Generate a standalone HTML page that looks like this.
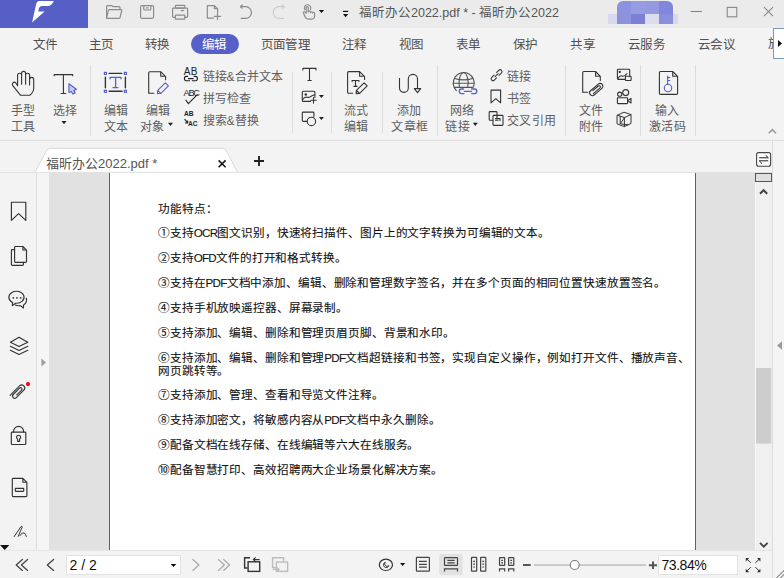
<!DOCTYPE html>
<html lang="zh-CN">
<head>
<meta charset="utf-8">
<style>
*{box-sizing:border-box;margin:0;padding:0}
html,body{width:784px;height:578px;overflow:hidden;background:#f3f3f3;font-family:"Liberation Sans",sans-serif;color:#555}
.a{position:absolute}
.t{position:absolute;white-space:nowrap;line-height:1}
svg{position:absolute;overflow:visible}
.ic{fill:none;stroke:#333;stroke-width:1.1;stroke-linecap:round;stroke-linejoin:round}
.gi{fill:none;stroke:#8c8c8c;stroke-width:1.2;stroke-linecap:round;stroke-linejoin:round}
.menu{font-size:12.5px;letter-spacing:-0.6px;color:#505050;top:39px}
.lbl{font-size:12px;letter-spacing:0.3px;color:#5e5e5e}
.lt{letter-spacing:-0.7px}
.doc{font-size:11.6px;letter-spacing:-0.12px;color:#111;-webkit-text-stroke:0.1px #111;left:158px}
</style>
</head>
<body>
<!-- TITLE BAR -->
<div class="a" style="left:0;top:0;width:784px;height:28px;background:#ebebeb"></div>
<div class="a" style="left:0;top:0;width:88px;height:28px;background:#565fc6"></div>
<svg style="left:0;top:0" width="88" height="28"><path d="M53.8,1.1 L39.5,1.1 Q36.6,1.4 36,4.8 L32.1,22.6 L44.6,11.5 L38.2,11.5 L38.9,8.2 Q39.6,6.1 42.3,6.1 L48.5,6.1 Q51.8,5.8 53.8,1.1 Z" fill="#fff"/></svg>

<div id="title-icons">
<svg style="left:0;top:0" width="784" height="28">
<g class="gi">
<path d="M106.6,17.8 V6.8 Q106.6,5.6 107.8,5.6 H111.6 L113,6.6 H119 Q120,6.6 120,7.6 V9.2"/>
<path d="M108.8,9.6 H121.2 Q122,9.6 121.8,10.4 L120,17.6 Q119.8,18.3 119,18.3 H107 Q106.4,18.3 106.6,17.6 L108.4,10.3"/>
<rect x="140.6" y="5.6" width="13" height="12.7" rx="1.2"/>
<path d="M143.8,5.8 V9.2 Q143.8,10 144.6,10 H150 Q150.8,10 150.8,9.2 V5.8"/>
<path d="M146.6,7.9 H148"/>
<rect x="175.4" y="5.4" width="9.4" height="2.8" rx="0.6"/>
<path d="M175,17.4 H173.4 Q172.6,17.4 172.6,16.6 V9 Q172.6,8.2 173.4,8.2 H186.8 Q187.6,8.2 187.6,9 V16.6 Q187.6,17.4 186.8,17.4 H185"/>
<rect x="175.4" y="15.2" width="9.4" height="3.9" rx="0.6"/>
<path d="M181.2,10.6 H183.6"/>
<path d="M213.4,18.2 H207.9 Q207.3,18.2 207.3,17.6 V6.2 Q207.3,5.6 207.9,5.6 H214.4 L217.6,8.8 V12.4"/>
<path d="M214.4,5.8 V8.6 H217.4"/>
<path d="M214.4,16.4 H220.6 M217.5,13.3 V19.5"/>
<path d="M240.6,6.6 H245.6 A5.85,5.85 0 0 1 245.6,18.3 H241.2"/>
<path d="M242.2,5 L240.4,6.6 L242.2,8.2"/>
<path d="M303.5,13.2 Q303,11.8 304.4,11.8 Q305.4,11.8 306.2,13.4 V7.6 Q306.2,6.6 307.2,6.6 Q308.2,6.6 308.2,7.6 V12 Q308.2,10.8 309.4,10.8 Q310.4,10.8 310.4,12 V12.6 Q310.6,11.6 311.6,11.8 Q312.4,11.9 312.6,13 Q312.8,12.2 313.6,12.4 Q314.6,12.6 314.6,13.6 V16 Q314.6,19.2 310.8,19.2 H308.8 Q306.6,19.2 305.4,17.4 Z"/>
<path d="M304.8,9.6 A3.2,3.2 0 1 1 310.4,9.4"/>
</g>
<g class="gi" style="stroke:#cbcbcb">
<path d="M284,6.6 H279 A5.85,5.85 0 0 0 279,18.3 H283.4"/>
<path d="M282.4,5 L284.2,6.6 L282.4,8.2"/>
</g>
<path d="M318.9,10 H324.1 L321.5,13.1 Z" fill="#111"/>
<rect x="343" y="10.8" width="5.2" height="1.2" fill="#111"/>
<path d="M343,14 H348.2 L345.6,17.2 Z" fill="#111"/>
</svg>
<div class="a" style="left:608px;top:14px;width:70px;height:10px;background:#d8d8ee"></div>
<div class="a" style="left:617px;top:1px;width:56px;height:23px;border-radius:6px 6px 0 0;overflow:hidden">
<div class="a" style="left:0;top:0;width:14px;height:13px;background:#8c92e0"></div>
<div class="a" style="left:14px;top:0;width:14px;height:13px;background:#969be2"></div>
<div class="a" style="left:28px;top:0;width:14px;height:13px;background:#959ae0"></div>
<div class="a" style="left:42px;top:0;width:14px;height:13px;background:#8086da"></div>
<div class="a" style="left:0;top:13px;width:14px;height:10px;background:#8d92dc"></div>
<div class="a" style="left:14px;top:13px;width:14px;height:10px;background:#7b80d6"></div>
<div class="a" style="left:28px;top:13px;width:14px;height:10px;background:#dcdcef"></div>
<div class="a" style="left:42px;top:13px;width:14px;height:10px;background:#8a8fdc"></div>
</div>
<svg style="left:0;top:0" width="784" height="28">
<path d="M690.5,11.5 H702" stroke="#888" stroke-width="1.1" fill="none"/>
<rect x="727.2" y="7.4" width="9.6" height="9.4" stroke="#888" stroke-width="1.1" fill="none"/>
<path d="M764,7.2 L773,16.2 M773,7.2 L764,16.2" stroke="#888" stroke-width="1.1" fill="none"/>
</svg>
</div>
<div class="t" style="left:359px;top:7px;font-size:12.5px;color:#555">福昕办公2022.pdf * - 福昕办公2022</div>

<!-- MENU -->
<div id="menu">
<div class="t menu" style="left:32.5px">文件</div>
<div class="t menu" style="left:88.5px">主页</div>
<div class="t menu" style="left:144.8px">转换</div>
<div class="t menu" style="left:260.5px">页面管理</div>
<div class="t menu" style="left:341.5px">注释</div>
<div class="t menu" style="left:399.1px">视图</div>
<div class="t menu" style="left:455.8px">表单</div>
<div class="t menu" style="left:512.5px">保护</div>
<div class="t menu" style="left:570.2px">共享</div>
<div class="t menu" style="left:628.0px">云服务</div>
<div class="t menu" style="left:698.1px">云会议</div>
<div class="a" style="left:190.5px;top:33.5px;width:48.5px;height:20px;border-radius:10px;background:#5660c8"></div>
<div class="t menu" style="left:201.5px;color:#fff">编辑</div>
<div class="a" style="left:765px;top:28px;width:8px;height:31px;overflow:hidden"><div class="t menu" style="left:2.5px;top:10px">旅</div></div>
<div class="a" style="left:773px;top:28px;width:14px;height:31px;background:#fff;border:1px solid #7d9bb8"></div>
<svg style="left:0;top:0" width="784" height="60"><path d="M778,40 L782,43.5 L778,47 Z" fill="#111"/></svg>
</div>

<!-- RIBBON -->
<div id="ribbon">
<div class="t lbl" style="left:10.5px;top:105px">手型</div>
<div class="t lbl" style="left:10.5px;top:121px">工具</div>
<div class="t lbl" style="left:52.5px;top:105px">选择</div>
<div class="t lbl" style="left:103.5px;top:105px">编辑</div>
<div class="t lbl" style="left:103.5px;top:121px">文本</div>
<div class="t lbl" style="left:145.5px;top:105px">编辑</div>
<div class="t lbl" style="left:140.0px;top:121px">对象</div>
<div class="t lbl" style="left:202.5px;top:71px;letter-spacing:0">链接&amp;合并文本</div>
<div class="t lbl" style="left:202.5px;top:93px">拼写检查</div>
<div class="t lbl" style="left:202.5px;top:115px;letter-spacing:0">搜索&amp;替换</div>
<div class="t lbl" style="left:344.1px;top:105px">流式</div>
<div class="t lbl" style="left:344.1px;top:121px">编辑</div>
<div class="t lbl" style="left:396.8px;top:105px">添加</div>
<div class="t lbl" style="left:391.3px;top:121px">文章框</div>
<div class="t lbl" style="left:450.1px;top:105px">网络</div>
<div class="t lbl" style="left:445.3px;top:121px">链接</div>
<div class="t lbl" style="left:507.2px;top:71px">链接</div>
<div class="t lbl" style="left:507.2px;top:93px">书签</div>
<div class="t lbl" style="left:507.2px;top:115px">交叉引用</div>
<div class="t lbl" style="left:578.5px;top:105px">文件</div>
<div class="t lbl" style="left:578.5px;top:121px">附件</div>
<div class="t lbl" style="left:654.9px;top:105px">输入</div>
<div class="t lbl" style="left:649.1px;top:121px">激活码</div>
<svg style="left:0;top:0" width="784" height="141">
<g fill="#dcdcdc">
<rect x="90" y="65" width="1" height="71"/><rect x="292" y="72" width="1" height="61"/><rect x="331" y="72" width="1" height="61"/>
<rect x="382" y="72" width="1" height="61"/><rect x="437" y="65" width="1" height="71"/><rect x="565" y="65" width="1" height="71"/>
<rect x="640" y="65" width="1" height="71"/><rect x="695" y="65" width="1" height="71"/>
</g>
<g fill="#222">
<path d="M61.5,121 H66.5 L64,124.2 Z"/><path d="M168,122.8 H173 L170.5,126 Z"/><path d="M472.8,122.8 H477.8 L475.3,126 Z"/>
<path d="M318.9,95 H323.9 L321.4,98.1 Z"/><path d="M318.9,117 H323.9 L321.4,120.1 Z"/>
</g>
<path d="M768.8,133.2 L772.4,129.6 L776,133.2" fill="none" stroke="#9a9a9a" stroke-width="1.6"/>
<g class="ic">
<path d="M17.6,85.8 V75.2 A2,2 0 0 1 21.6,75.2 V84.2 M21.6,75.2 V73.4 A2,2 0 0 1 25.6,73.4 V84.2 M25.6,75.3 A2,2 0 0 1 29.6,75.3 V85 M29.6,79.4 A2.05,2.05 0 0 1 33.7,79.4 V88.6 Q33.7,91.6 31.6,93.6 L30,95.2 H20.4 L12.6,85.4 Q11.8,84 12.9,82.8 Q14.3,81.5 15.7,82.8 L17.6,85.6"/>
<path d="M54.2,75.8 V74.6 H72.7 V75.8 M63.4,74.6 V93.5 M61.1,93.5 H65.8"/>
<path d="M109.1,73.4 H121.8 M109.1,91.3 H122.1 M105.4,77.1 V87.7 M125.4,77.1 V87.7" style="stroke-width:1.4"/>
<path d="M148.7,93.2 V72.8 Q148.7,71.7 149.8,71.7 H160.7 L165.6,76.6 V79.7 M160.7,71.9 V76.3 H165.4 M148.7,92.2 Q148.7,93.2 149.8,93.2 H153.8"/>
<path d="M347.6,92.3 V72.7 Q347.6,71.6 348.7,71.6 H359.6 L364.6,76.6 V79.5 M359.6,71.8 V76.3 H364.4 M347.6,92.3 Q347.6,93.3 348.7,93.3 H352.6"/>
<path d="M352.1,81.6 V80.5 H358.9 V81.6 M355.5,80.5 V86.4 M353.9,86.4 H357.1"/>
<path d="M364.1,82.8 L367.2,85.9 L359.6,93.4 L356.2,93.6 L356.4,90.4 Z M356.5,90.5 L359.6,93.4"/>
<path d="M399.5,78.3 V88 A4.4,4.4 0 0 0 408.3,88 V79 A4.6,4.6 0 0 1 417.5,79 V88.4"/>
<path d="M414.3,88.6 H420.7 L417.5,92.7 Z"/>
<path d="M456.4,90.6 A10.5,10.5 0 1 1 473.6,86.6" stroke="#555"/>
<path d="M459.4,87.4 A4.6,10.4 0 1 1 467.8,87.4" stroke="#555"/>
<path d="M454.6,78.4 Q463.6,81.4 472.6,78.4 M453.2,83.3 H474 M454.4,87.4 H473" stroke="#555"/>
<path d="M582.7,92.3 V72.6 Q582.7,71.5 583.8,71.5 H595.6 L600.3,76.3 V80.5 M595.6,71.7 V76.3 H600.1 M582.7,91.3 Q582.7,92.3 583.8,92.3 H587.6"/>
<g transform="translate(596.6,89.2) rotate(-41)"><path d="M-4.2,2.8 H4.6 A2.8,2.8 0 0 0 4.6,-2.8 H-5.6 A2.8,2.8 0 0 0 -5.6,2.8 H-4 M-5.4,1.3 H3.4 A1.3,1.3 0 0 0 3.4,-1.3 H-3.8" stroke-width="1.05"/></g>
<path d="M659.4,93.3 V72.6 Q659.4,71.5 660.5,71.5 H672.7 L677.6,76.4 V93.3 Q677.6,94.4 676.5,94.4 H660.5 Q659.4,94.4 659.4,93.3 M672.7,71.7 V76.3 H677.4"/>
<path d="M491,102.8 V90.1 H500.6 V102.8 L495.8,98.7 Z"/>
<path d="M497,118 V112.4 Q497,111.6 496.2,111.6 H490 Q489.2,111.6 489.2,112.4 V119.4 Q489.2,120.2 490,120.2 H492.8"/>
<rect x="493" y="115.4" width="10" height="10" rx="0.8"/>
<path d="M495.5,118.6 H500 V120.6 M495.5,120.2 H498"/>
<g transform="translate(496.6,75.2) rotate(-45) scale(0.9)"><path d="M-1.8,-2.1 H-5.6 A2.1,2.1 0 0 0 -5.6,2.1 H-2.2 M1.8,2.1 H5.6 A2.1,2.1 0 0 0 5.6,-2.1 H2.2 M-2.4,0 H2.4" stroke-width="1.15"/></g>
<path d="M302.9,69.9 V68.4 H316 V69.9 M309.5,68.4 V80.5 M307.9,80.5 H311.3"/>
<path d="M310.4,101.4 H303.3 Q302.3,101.4 302.3,100.4 V92.2 Q302.3,91.2 303.3,91.2 H313.9 Q314.9,91.2 314.9,92.2 V97.4 M302.5,99.6 Q304.8,96.6 306.8,97.2 Q308.6,97.8 310.4,96.8 Q312.4,95.4 314.8,94.8 M310.8,100.3 H316.3 M313.5,97.6 V103.1"/>
<circle cx="305.8" cy="94.6" r="0.7"/>
<path d="M306.8,121.4 H303.2 Q302.3,121.4 302.3,120.5 V113 Q302.3,112.1 303.2,112.1 H313 Q313.9,112.1 313.9,113 V116.6"/>
<circle cx="311.4" cy="121.4" r="4.2"/>
<path d="M625,79.4 H618.2 Q617.4,79.4 617.4,78.6 V70 Q617.4,69.2 618.2,69.2 H628.9 Q629.7,69.2 629.7,70 V76.2 M617.6,78.6 Q620.2,75 622,76 Q623.8,77.2 627,73.6"/>
<rect x="625.4" y="76.2" width="5.7" height="4.3" rx="0.6"/>
<circle cx="619.8" cy="72" r="0.6"/>
<circle cx="619.7" cy="94.2" r="2.1"/><circle cx="625.7" cy="92.6" r="3"/>
<rect x="617.4" y="97.7" width="10.2" height="5.9" rx="0.6"/>
<path d="M627.6,100.6 L631,98.4 V103 Z"/>
<path d="M617.4,115.2 L624,112.2 L631,114.6 V123.4 L624.4,126.6 L617.4,124 Z M617.4,115.2 L624.4,117.6 L631,114.6 M624.4,117.6 V126.6 M620.2,116.2 V123.8 L627.8,124.8 M620.4,123.6 L624.4,117.8" stroke-width="1"/>
</g>
<g fill="none" stroke="#5660c8" stroke-width="1.1" stroke-linejoin="round" stroke-linecap="round">
<path d="M68.9,83.8 L76.4,89.3 L73.9,90.6 L75.3,93 L72.8,94.1 L71.4,91.6 L68.9,92.4 Z" fill="#c5c9f4"/>
<g stroke="none" fill="#5660c8"><rect x="103.8" y="71.8" width="3.2" height="3.2"/><rect x="123.8" y="71.8" width="3.2" height="3.2"/><rect x="103.8" y="89.7" width="3.2" height="3.2"/><rect x="123.8" y="89.7" width="3.2" height="3.2"/></g>
<g stroke="none" fill="#fff"><rect x="105" y="73" width="0.9" height="0.9"/><rect x="125" y="73" width="0.9" height="0.9"/><rect x="105" y="90.9" width="0.9" height="0.9"/><rect x="125" y="90.9" width="0.9" height="0.9"/></g>
<path d="M110.1,78.8 V77.3 H121 V78.8 M115.6,77.3 V87.6 M113,87.6 H117.9" stroke-width="1.3"/>
<path d="M165.3,82.8 L168.4,85.9 L160.9,93.3 L157.4,93.6 L157.7,90.3 Z M157.8,90.4 L160.9,93.3"/>
<path d="M463.6,89 H461.4 Q459.3,89 459.3,91.3 Q459.3,93.6 461.4,93.6 H464 M471.6,89 H474.6 Q476.8,89 476.8,91.3 Q476.8,93.6 474.6,93.6 H471.6 M464.4,91.3 H471.6" stroke-width="1.3"/>
<path d="M667.6,76 V84.1 M667.6,77.6 H669.8 M667.6,80.5 H669.8"/>
<circle cx="668" cy="88" r="3.7"/>
</g>
</svg>
<div class="t" style="left:183.8px;top:67.2px;font-size:10px;letter-spacing:0.4px;color:#222">AB</div>
<svg style="left:0;top:0" width="784" height="141"><path d="M188,76.4 H186.2 Q184.4,76.4 184.4,78.6 Q184.4,80.8 186.2,80.8 H190 M193.6,76.4 H195.6 Q197.4,76.4 197.4,78.6 Q197.4,80.8 195.6,80.8 H191.8 M188,78.6 H193.6" fill="none" stroke="#222" stroke-width="1.1"/>
<path d="M185.6,99.8 L188.3,103.6 L197.6,94.4" fill="none" stroke="#222" stroke-width="1.1"/>
<path d="M184.6,119.2 L187.2,122.4 M185,123 L187.6,123 L187.6,120.6" fill="none" stroke="#222" stroke-width="1.1"/></svg>
<div class="t" style="left:183.6px;top:88.6px;font-size:9.2px;letter-spacing:-1.3px;color:#222">ABC</div>
<div class="t" style="left:184px;top:111.3px;font-size:6.6px;font-weight:bold;color:#222">AB</div>
<div class="t" style="left:188px;top:120.5px;font-size:6.6px;font-weight:bold;color:#222">AC</div>
</div>
<div class="a" style="left:0;top:140px;width:784px;height:1px;background:#dedede"></div>

<!-- TAB BAR -->
<div id="tabs">
<svg style="left:0;top:0" width="784" height="178">
<path d="M34.8,172.4 L46.4,151.2 Q48,148.3 51,148.3 H222.4 Q225,148.3 226.4,151 L237.6,172.4 Z" fill="#fff" stroke="#d6d6d6" stroke-width="0.9"/>
<rect x="0" y="172" width="772" height="1" fill="#e2e2e2"/>
<path d="M218.6,160.4 L225.6,167.2 M225.6,160.4 L218.6,167.2" stroke="#111" stroke-width="1.5" fill="none"/>
<path d="M254,161 H264 M259,156.1 V165.9" stroke="#222" stroke-width="1.9" fill="none"/>
<rect x="756.6" y="152.6" width="14" height="13.6" rx="2" fill="#fff" stroke="#444" stroke-width="1.1"/>
<path d="M759.2,157.8 H768.4 L765.6,155.2 M768.2,160.8 H759.2 L762,163.6" stroke="#222" stroke-width="1" fill="none"/>
</svg>
<div class="t" style="left:46px;top:157px;font-size:13px;color:#555">福昕办公2022.pdf *</div>
</div>

<!-- MAIN -->
<div class="a" style="left:0;top:173px;width:36px;height:377px;background:#f3f3f3"></div>
<div class="a" style="left:36px;top:173px;width:1px;height:377px;background:#dcdcdc"></div>
<div class="a" style="left:37px;top:173px;width:12px;height:377px;background:#f5f5f5"></div>
<div class="a" style="left:49px;top:173px;width:706px;height:377px;background:#e1e1e1"></div>
<div class="a" style="left:109px;top:173px;width:587px;height:377px;background:#fff;border-left:1px solid #606060;border-right:1px solid #606060"></div>
<div class="a" style="left:755px;top:173px;width:1px;height:377px;background:#f7f7f7"></div>
<div class="a" style="left:756px;top:173px;width:16px;height:377px;background:#f0f0f0"></div>
<div class="a" style="left:772px;top:141px;width:1px;height:437px;background:#dcdcdc"></div>
<div class="a" style="left:773px;top:141px;width:11px;height:437px;background:#f4f4f4"></div>

<div id="doctext">
<div class="t doc" style="top:203px">功能特点：</div>
<div class="t doc" style="top:227px">①支持<span class="lt">OCR</span>图文识别，快速将扫描件、图片上的文字转换为可编辑的文本。</div>
<div class="t doc" style="top:252px">②支持<span class="lt">OFD</span>文件的打开和格式转换。</div>
<div class="t doc" style="top:277px">③支持在<span class="lt">PDF</span>文档中添加、编辑、删除和管理数字签名，并在多个页面的相同位置快速放置签名。</div>
<div class="t doc" style="top:302px">④支持手机放映遥控器、屏幕录制。</div>
<div class="t doc" style="top:327px">⑤支持添加、编辑、删除和管理页眉页脚、背景和水印。</div>
<div class="t doc" style="top:352px">⑥支持添加、编辑、删除和管理<span class="lt">PDF</span>文档超链接和书签，实现自定义操作，例如打开文件、播放声音、</div>
<div class="t doc" style="top:365px">网页跳转等。</div>
<div class="t doc" style="top:389px">⑦支持添加、管理、查看和导览文件注释。</div>
<div class="t doc" style="top:414px">⑧支持添加密文，将敏感内容从<span class="lt">PDF</span>文档中永久删除。</div>
<div class="t doc" style="top:439px">⑨配备文档在线存储、在线编辑等六大在线服务。</div>
<div class="t doc" style="top:464px">⑩配备智慧打印、高效招聘两大企业场景化解决方案。</div>
</div>
<div id="sidebar">
<svg style="left:0;top:0" width="784" height="578">
<g class="ic" style="stroke:#333;stroke-width:1.15">
<path d="M11.4,220.4 V202.2 H25.8 V220.4 L18.6,213.6 Z"/>
<path d="M14.6,261.4 V247.4 Q14.6,246.5 15.5,246.5 H22.9 L26.5,250.1 V261.4 Q26.5,262.3 25.6,262.3 H15.5 Q14.6,262.3 14.6,261.4 Z M22.9,246.7 V250 H26.3"/>
<path d="M14.4,249.6 H12.3 Q11.4,249.6 11.4,250.5 V264.5 Q11.4,265.4 12.3,265.4 H22.5 Q23.4,265.4 23.4,264.5 V262.4"/>
<path d="M12.6,302.4 A7.6,6 0 1 1 15.6,303.2 L12.4,305.6 Z"/>
<path d="M26.4,298.2 Q27.4,302.6 23.6,305 L23.4,308 L20.4,305.6 Q17.2,306 15.4,305"/>
<path d="M10.4,342.3 L19,337.2 L27.8,342.3 L19,346.6 Z M10.4,346.3 L19,350.5 L27.8,346.3 M10.4,350.3 L19,354.5 L27.8,350.3"/>
<g transform="translate(18.3,391.4) rotate(-45)"><path d="M-8.6,-3 H4.8 A3,3 0 0 1 4.8,3 H-5.8 A2.2,2.2 0 0 1 -5.8,-1.4 H3.3 A1.4,1.4 0 0 1 3.3,1.4 H-3.6"/></g>
<rect x="11.3" y="432.1" width="14.5" height="12.4" rx="0.8"/>
<path d="M13.6,432 V431.4 A5,5 0 0 1 23.6,431.4 V432"/>
<path d="M17.6,441.3 V439 A2,2 0 1 1 19.6,439 V441.3 Z"/>
<path d="M12.3,495.7 V479.2 Q12.3,478.3 13.2,478.3 H22.9 L26.9,482.3 V495.7 Q26.9,496.6 26,496.6 H13.2 Q12.3,496.6 12.3,495.7 Z M22.9,478.5 V482.2 H26.7"/>
<rect x="15.3" y="488.3" width="8.4" height="3" rx="0.5"/>
<path d="M14.2,536.6 L20.8,526.8 Q21.8,525.7 22.3,526.9 L18.2,536.4 M19.9,535.6 Q22.4,531.6 24.4,533 Q25.6,534 26.3,536.4" style="stroke-width:1"/>
</g>
<g fill="#333"><circle cx="13.3" cy="297.8" r="0.9"/><circle cx="17" cy="297.8" r="0.9"/><circle cx="20.7" cy="297.8" r="0.9"/></g>
<circle cx="28" cy="384.1" r="2.1" fill="#f00"/>
<path d="M0,545 H9.4 L4.7,550 Z" fill="#111"/>
<path d="M41.4,358.6 L46,362.6 L41.4,366.6 Z" fill="#a0a0a0"/>
</svg>
</div>
<div id="scroll">
<svg style="left:0;top:0" width="784" height="578">
<rect x="755.5" y="173.5" width="16" height="8" fill="#e0e0e0" stroke="#555" stroke-width="1"/>
<path d="M760,193.8 L763.6,190.2 L767.2,193.8" fill="none" stroke="#444" stroke-width="2"/>
<rect x="756" y="368" width="15.2" height="75.6" fill="#cdcdcd"/>
<path d="M760,542.8 L763.8,546.6 L767.6,542.8" fill="none" stroke="#444" stroke-width="1.9"/>
<path d="M782,341.2 L777,345.5 L782,349.8 Z" fill="#9a9a9a"/>
</svg>
</div>

<!-- STATUS -->
<div class="a" style="left:0;top:550px;width:772px;height:28px;background:#f3f3f3;border-top:1px solid #e6e6e6"></div>
<div id="status">
<svg style="left:0;top:0" width="784" height="578">
<g fill="none" stroke="#444" stroke-width="1.3" stroke-linecap="round" stroke-linejoin="round">
<path d="M22.4,559.4 L16.2,564.9 L22.4,570.4 M27.6,559.4 L21.4,564.9 L27.6,570.4"/>
<path d="M53.6,559.4 L47.3,564.9 L53.6,570.4"/>
</g>
<rect x="66.5" y="555.5" width="114" height="19" fill="#fff" stroke="#e2e2e2" stroke-width="1"/>
<path d="M170.6,564 H176.4 L173.5,567 Z" fill="#111"/>
<g fill="none" stroke="#aaa" stroke-width="1.3" stroke-linecap="round" stroke-linejoin="round">
<path d="M192.8,559.6 L199,564.9 L192.8,570.4"/>
<path d="M218.4,559.6 L224.4,564.9 L218.4,570.4 M223.6,559.6 L229.6,564.9 L223.6,570.4"/>
</g>
<g fill="none" stroke="#333" stroke-width="1.4">
<path d="M247.6,568 H244.6 V557.8 H250"/>
<rect x="248.1" y="561.8" width="11.6" height="9.6"/>
<path d="M259.6,559.6 H253.4 M255.6,557.4 L253.4,559.6 L255.6,561.8" stroke-width="1.1"/>
</g>
<g fill="none" stroke="#bdbdbd" stroke-width="1.4">
<path d="M275.8,567.6 H272.6 V557.8 H283.6 V561.6"/>
<rect x="276.4" y="562" width="11.2" height="9.4"/>
<path d="M272.6,569.4 H279 M277,567.4 L279.1,569.4 L277,571.4" stroke-width="1.1"/>
</g>
<g fill="none" stroke="#333" stroke-width="1.2">
<ellipse cx="385.9" cy="564.8" rx="6.6" ry="5.7"/>
<path d="M385.4,562.3 A2.7,2.7 0 1 0 388.8,565.6 A2.2,2.2 0 0 1 385.4,562.3 Z" stroke-width="1"/>
</g>
<path d="M400,563 H405.2 L402.6,565.9 Z" fill="#111"/>
<rect x="439.2" y="554.1" width="23.4" height="21.2" rx="2.5" fill="#e2e2e2"/>
<g fill="none" stroke="#444" stroke-width="1.2">
<rect x="416.4" y="557.4" width="13" height="13.8" rx="0.6"/>
<path d="M419,561.4 H426.8 M419,564.3 H426.8 M419,567.2 H426.8"/>
<rect x="444.5" y="557.6" width="13" height="7.8" rx="0.6"/>
<path d="M447.4,560.3 H454.6 M447.4,562.9 H454.6"/>
<path d="M444.5,571.6 V568.8 H457.5 V571.6"/>
<rect x="471.5" y="557.4" width="5.2" height="13.8" rx="0.5"/>
<rect x="480.6" y="557.4" width="5.2" height="13.8" rx="0.5"/>
<path d="M473.2,561.4 H475 M473.2,564.2 H475 M473.2,567 H475 M482.3,561.4 H484.1 M482.3,564.2 H484.1 M482.3,567 H484.1"/>
<rect x="499.5" y="557.6" width="5.2" height="7.8" rx="0.5"/>
<rect x="508.6" y="557.6" width="5.2" height="7.8" rx="0.5"/>
<path d="M501.2,560.4 H503 M501.2,562.9 H503 M510.3,560.4 H512.1 M510.3,562.9 H512.1"/>
<path d="M499.5,571.6 V568.8 H504.7 V571.6 M508.6,571.6 V568.8 H513.8 V571.6"/>
</g>
<rect x="523" y="564" width="7.7" height="2" fill="#555"/>
<rect x="534" y="564.3" width="112" height="1.5" fill="#bcbcbc"/>
<circle cx="574.7" cy="565" r="4.5" fill="#fff" stroke="#777" stroke-width="1.1"/>
<path d="M648.9,565.2 H657 M653,561.4 V569" stroke="#555" stroke-width="2"/>
<rect x="658.5" y="555.5" width="79" height="19" fill="#fff" stroke="#e2e2e2" stroke-width="1"/>
<g fill="none" stroke="#333" stroke-width="1.2">
<path d="M746.8,559 L750.8,562.8 M759.4,559 L755.4,562.8 M746.8,571.2 L750.8,567.2 M759.4,571.2 L755.4,567.2" stroke-width="1"/>
</g>
<g fill="#333">
<path d="M745.8,558 H749.2 L745.8,561.4 Z M760.4,558 H757 L760.4,561.4 Z M745.8,572.2 H749.2 L745.8,568.8 Z M760.4,572.2 H757 L760.4,568.8 Z"/>
</g>
<path d="M776,578.5 L784.5,570 M780,578.5 L784.5,574" stroke="#555" stroke-width="1"/>
</svg>
<div class="t" style="left:69.5px;top:557.8px;font-size:14px;color:#111">2 / 2</div>
<div class="t" style="left:661.5px;top:557.8px;font-size:14px;letter-spacing:-0.45px;color:#111">73.84%</div>
</div>
</body>
</html>
